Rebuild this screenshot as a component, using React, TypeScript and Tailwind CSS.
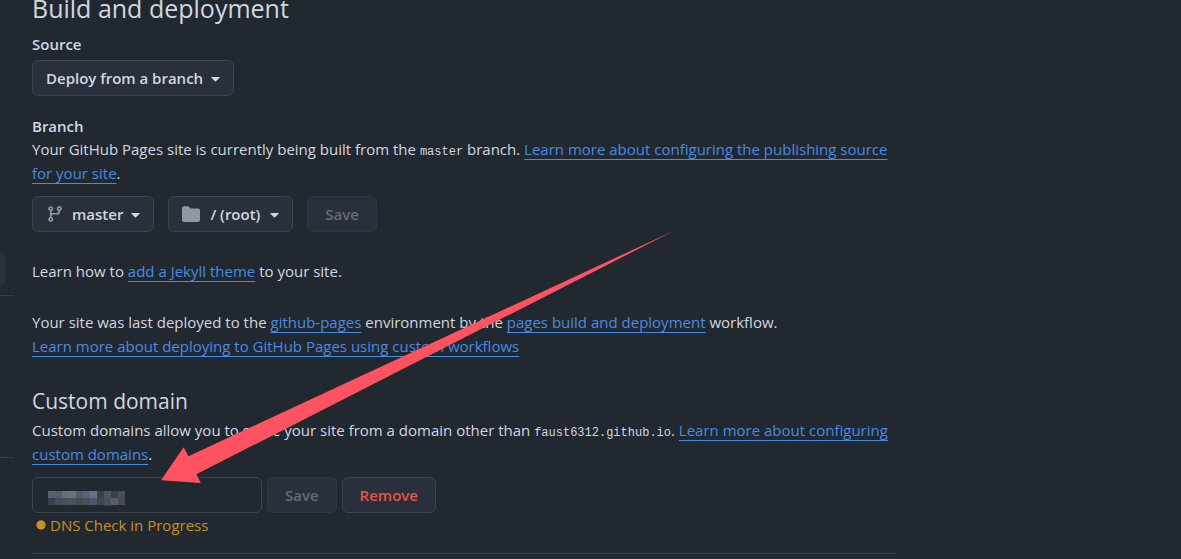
import type { ButtonHTMLAttributes, ReactNode } from "react";

const mosaic = [
  ["#5c5f69", "#525a70", "#6a6d76", "#6c7079", "#505c6c", "#62606a", "#65718a", "#3c404a", "#50535e", "#3b414c", "#4a4e58"],
  ["#3b3f49", "#454c5c", "#4b4f5a", "#4d515b", "#444b55", "#4c4e56", "#4e5868", "#404550", "#484e5e", "#5b5e67", "#484b55"],
];

function Button({ className = "", ...rest }: ButtonHTMLAttributes<HTMLButtonElement>) {
  return (
    <button
      type="button"
      className={`flex h-9 items-center justify-center rounded-md border border-[#3d444d] bg-[#2a303b] pb-px text-[15px] leading-6 font-semibold disabled:border-[#30363f] disabled:text-[#656c76] ${className}`}
      {...rest}
    />
  );
}

function Caret() {
  return (
    <svg aria-hidden="true" width="9" height="5" viewBox="0 0 9 5" className="mt-[3px] shrink-0 fill-current">
      <path d="M0.6 0H8.4Q9 0.2 8.6 0.7L5 4.3Q4.5 4.7 4 4.3L0.4 0.7Q0 0.2 0.6 0Z" />
    </svg>
  );
}

function BranchIcon() {
  return (
    <svg aria-hidden="true" width="18" height="18" viewBox="0 0 16 16" className="shrink-0 fill-[#9198a1]">
      <path d="M9.5 3.25a2.25 2.25 0 1 1 3 2.122V6A2.5 2.5 0 0 1 10 8.5H6a1 1 0 0 0-1 1v1.128a2.251 2.251 0 1 1-1.5 0V5.372a2.25 2.25 0 1 1 1.5 0v1.836A2.493 2.493 0 0 1 6 7h4a1 1 0 0 0 1-1v-.628A2.25 2.25 0 0 1 9.5 3.25Zm-6 0a.75.75 0 1 0 1.5 0 .75.75 0 0 0-1.5 0Zm8.25-.75a.75.75 0 1 0 0 1.5.75.75 0 0 0 0-1.5ZM4.25 12a.75.75 0 1 0 0 1.5.75.75 0 0 0 0-1.5Z" />
    </svg>
  );
}

function FolderIcon() {
  return (
    <svg aria-hidden="true" width="18" height="18" viewBox="0 0 16 16" className="shrink-0 fill-[#9198a1]">
      <path d="M1.75 1A1.75 1.75 0 0 0 0 2.75v10.5C0 14.216.784 15 1.75 15h12.5A1.75 1.75 0 0 0 16 13.25v-8.5A1.75 1.75 0 0 0 14.25 3H7.5a.25.25 0 0 1-.2-.1l-.9-1.2C6.07 1.26 5.55 1 5 1H1.75Z" />
    </svg>
  );
}

function Link({ children }: { children: ReactNode }) {
  return (
    <a href="#" className="text-[#478be6] underline decoration-1 underline-offset-4 [text-decoration-skip-ink:none]">
      {children}
    </a>
  );
}

function Code({ children }: { children: ReactNode }) {
  return <code className="font-['Liberation_Mono',monospace] text-[12px] leading-none">{children}</code>;
}

export default function App() {
  return (
    <div className="relative flex min-h-screen gap-[18px] overflow-hidden bg-[#22282f] font-['Open_Sans',sans-serif] text-[15px] leading-6 text-[#d1d7e0]">
      <aside className="w-[14px] shrink-0 pt-[251px]">
        <div className="h-9 w-[5px] rounded-r-md bg-[#2a3038]" />
        <hr className="mt-2 border-[#363d46]" />
        <hr className="mt-[161px] border-[#363d46]" />
      </aside>

      <main className="min-w-0 max-w-[864px] flex-1">
        <h2 className="-mt-2 text-[25px] leading-8">Build and deployment</h2>
        <h3 className="mt-[9px] leading-[22px] font-semibold">Source</h3>
        <Button className="mt-[5px] gap-2 px-[13px]">
          Deploy from a branch <Caret />
        </Button>

        <h3 className="mt-[19px] leading-[22px] font-semibold">Branch</h3>
        <p>
          Your GitHub Pages site is currently being built from the <Code>master</Code> branch.{" "}
          <Link>Learn more about configuring the publishing source for your site</Link>.
        </p>
        <div className="mt-[11px] flex gap-[14px]">
          <Button className="gap-2 px-[13px]">
            <BranchIcon /> master <Caret />
          </Button>
          <Button className="gap-[10px] px-[13px]">
            <FolderIcon /> / (root) <Caret />
          </Button>
          <Button className="px-[17px]" disabled>
            Save
          </Button>
        </div>

        <p className="mt-[27px]">
          Learn how to <Link>add a Jekyll theme</Link> to your site.
        </p>
        <p className="mt-[27px]">
          Your site was last deployed to the <Link>github-pages</Link> environment by the{" "}
          <Link>pages build and deployment</Link> workflow.
          <br />
          <Link>Learn more about deploying to GitHub Pages using custom workflows</Link>
        </p>

        <h3 className="mt-[27px] text-[21px] leading-8">
          <label htmlFor="custom-domain">Custom domain</label>
        </h3>
        <p className="mt-[1px]">
          Custom domains allow you to serve your site from a domain other than <Code>faust6312.github.io</Code>.{" "}
          <Link>Learn more about configuring custom domains</Link>.
        </p>
        <div className="mt-[11px] flex gap-[5px]">
          <div className="relative w-[230px]">
            <input
              id="custom-domain"
              type="text"
              className="h-9 w-full rounded-md border border-[#3d444d] bg-transparent px-3"
            />
            <svg
              aria-hidden="true"
              width="77"
              height="15"
              viewBox="0 0 77 15"
              shapeRendering="crispEdges"
              className="pointer-events-none absolute top-[14px] left-4"
            >
              {mosaic.map((row, y) =>
                row.map((fill, x) => <rect key={`${x}-${y}`} x={x * 7} y={y * 7} width="7" height="7" fill={fill} />),
              )}
              <rect x="56" y="14" width="7" height="1" fill="#39404c" />
            </svg>
          </div>
          <Button className="px-[17px]" disabled>
            Save
          </Button>
          <Button className="px-[17px] text-[#e5534b]">Remove</Button>
        </div>
        <p className="flex items-center gap-1 pl-1 text-[#c69026]" role="status">
          <svg aria-hidden="true" width="10" height="10" viewBox="0 0 10 10" className="shrink-0 fill-current">
            <circle cx="5" cy="5" r="4.7" />
          </svg>
          DNS Check in Progress
        </p>
        <hr className="mt-4 border-[#363d46]" />
      </main>

      <svg
        aria-hidden="true"
        width="515"
        height="254"
        viewBox="161 230 515 254"
        className="pointer-events-none absolute top-[230px] left-[161px] fill-[#ff5362]"
      >
        <path d="M161 480.3L183.6 447.3L188.5 456.2L675.5 230L196.3 474.3L200.8 483Z" />
      </svg>
    </div>
  );
}
